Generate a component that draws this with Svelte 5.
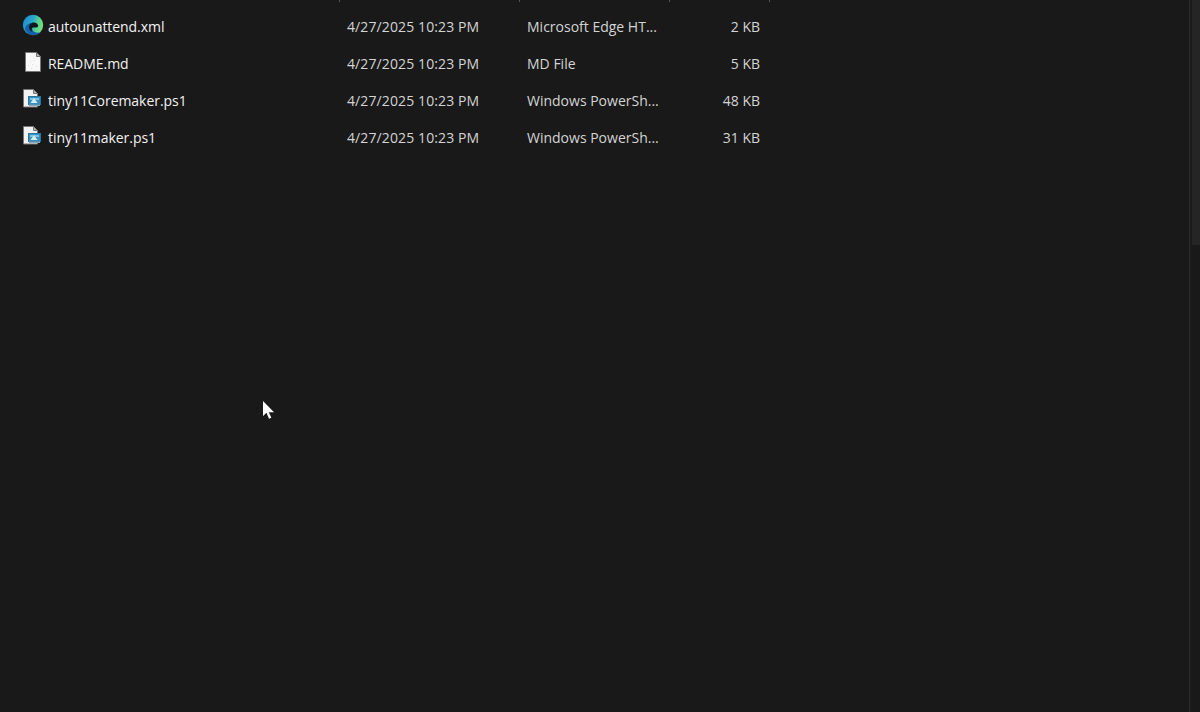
<script>
  const files = [
    { name: "autounattend.xml", icon: "edge", type: "Microsoft Edge HT...", size: "2 KB" },
    { name: "README.md", icon: "blank", type: "MD File", size: "5 KB" },
    { name: "tiny11Coremaker.ps1", icon: "ps", type: "Windows PowerSh...", size: "48 KB" },
    { name: "tiny11maker.ps1", icon: "ps", type: "Windows PowerSh...", size: "31 KB" }
  ]
  const modified = "4/27/2025 10:23 PM"
</script>

<div class="window">
  <main class="list">
    <div class="ticks">
      <span></span><span></span><span></span><span></span>
    </div>
    {#each files as file}
      <div class="row">
        <div class="name">
          <svg class="icon" width="22" height="22" viewBox="0 0 22 22">
            {#if file.icon === "edge"}
              <defs>
                <linearGradient id="edgeTop" x1="0" y1="0.2" x2="1" y2="0.5">
                  <stop offset="0" stop-color="#1f8fd0" />
                  <stop offset="0.45" stop-color="#28a6cc" />
                  <stop offset="0.72" stop-color="#56d090" />
                  <stop offset="1" stop-color="#7adf7c" />
                </linearGradient>
              </defs>
              <circle cx="11" cy="11" r="10.200" fill="url(#edgeTop)" />
              <path d="M3 15c1.500 3.700 4.500 6.200 8 6.200 3 0 5.500-1 7.500-3-3 1-6.500.4-8-2-1.300-2.200-.5-5 1.500-6.400C8 8 4 10 3 15z" fill="#135fa8" />
              <path d="M8.500 9.800c2.800-2.600 6.800-1.300 7.600 1.400.3 1.200-.4 2.200-2 2.200h-3.300c-1.300.8-1.600 2.900-.5 4.300-3-1-4.500-5.200-1.800-7.900z" fill="#10181f" />
            {:else if file.icon === "blank"}
              <path d="M3.500 1.500h11l4 4v15h-15z" fill="#f8f8f8" stroke="#777" />
              <path d="M14.500 1.500v4h4z" fill="#b5b5b5" stroke="#777" />
              <g fill="#dedede">
                <rect x="8" y="10" width="1" height="1" /><rect x="12" y="9" width="1" height="1" />
                <rect x="6" y="14" width="1" height="1" /><rect x="10" y="13" width="1" height="1" />
                <rect x="14" y="15" width="1" height="1" /><rect x="9" y="17" width="1" height="1" />
              </g>
            {:else}
              <path d="M1.500 1.500h10l4 4v13.500h-14z" fill="#f2f2f2" stroke="#777" />
              <path d="M11.500 1.500v4h4z" fill="#b5b5b5" stroke="#777" />
              <rect x="6.500" y="8.500" width="12" height="8" fill="#3a8fbe" stroke="#2a76a0" />
              <rect x="8" y="10" width="9" height="2" fill="#7cc3e4" />
              <path d="M12 10l3.500 5h-7z" fill="#d4eef8" />
              <rect x="7" y="16.500" width="11" height="1.500" fill="#86aabd" />
            {/if}
          </svg>
          <span>{file.name}</span>
        </div>
        <div class="date">{modified}</div>
        <div class="type">{file.type}</div>
        <div class="size">{file.size}</div>
      </div>
    {/each}
  </main>
  <aside class="scrollbar">
    <div class="thumb"></div>
  </aside>

  <svg class="cursor" width="11" height="18" viewBox="0 0 11 18">
    <path d="M0 0v15l3.500-3.200 2.500 5.900 2.300-1-2.500-5.500H11z" fill="#fff" />
  </svg>
</div>

<style>
  :global(body) {
    margin: 0;
    background: #191919;
    overflow: hidden;
  }

  .window {
    display: flex;
    height: 712px;
    background: #191919;
    color: #e4e4e4;
    font-family: "Open Sans", "Noto Sans", sans-serif;
    font-size: 14px;
  }

  .list {
    flex: 1;
  }

  .ticks {
    display: flex;
    height: 8px;
    padding-left: 339px;
  }
  .ticks span {
    height: 2px;
    border-left: 1px solid #555;
    width: 179px;
  }
  .ticks span:nth-child(2) { width: 149px; }
  .ticks span:nth-child(3) { width: 99px; }

  .row {
    display: grid;
    grid-template-columns: 340px 180px 150px 90px;
    height: 37px;
    align-items: center;
  }

  .name {
    display: flex;
    align-items: center;
    gap: 4px;
    padding-left: 22px;
    color: #f2f2f2;
    letter-spacing: -0.05px;
  }

  .icon {
    flex: none;
    margin-bottom: 4px;
  }

  .date, .type {
    padding-left: 7px;
    color: #d4d4d4;
  }

  .date {
    letter-spacing: 0.11px;
  }

  .size {
    text-align: right;
    color: #d4d4d4;
  }

  .scrollbar {
    width: 11px;
    border-left: 1px solid #2b2b2b;
    padding-left: 2px;
    box-sizing: border-box;
  }

  .thumb {
    height: 245px;
    background: #252525;
  }

  .cursor {
    position: absolute;
    left: 263px;
    top: 401px;
  }
</style>
